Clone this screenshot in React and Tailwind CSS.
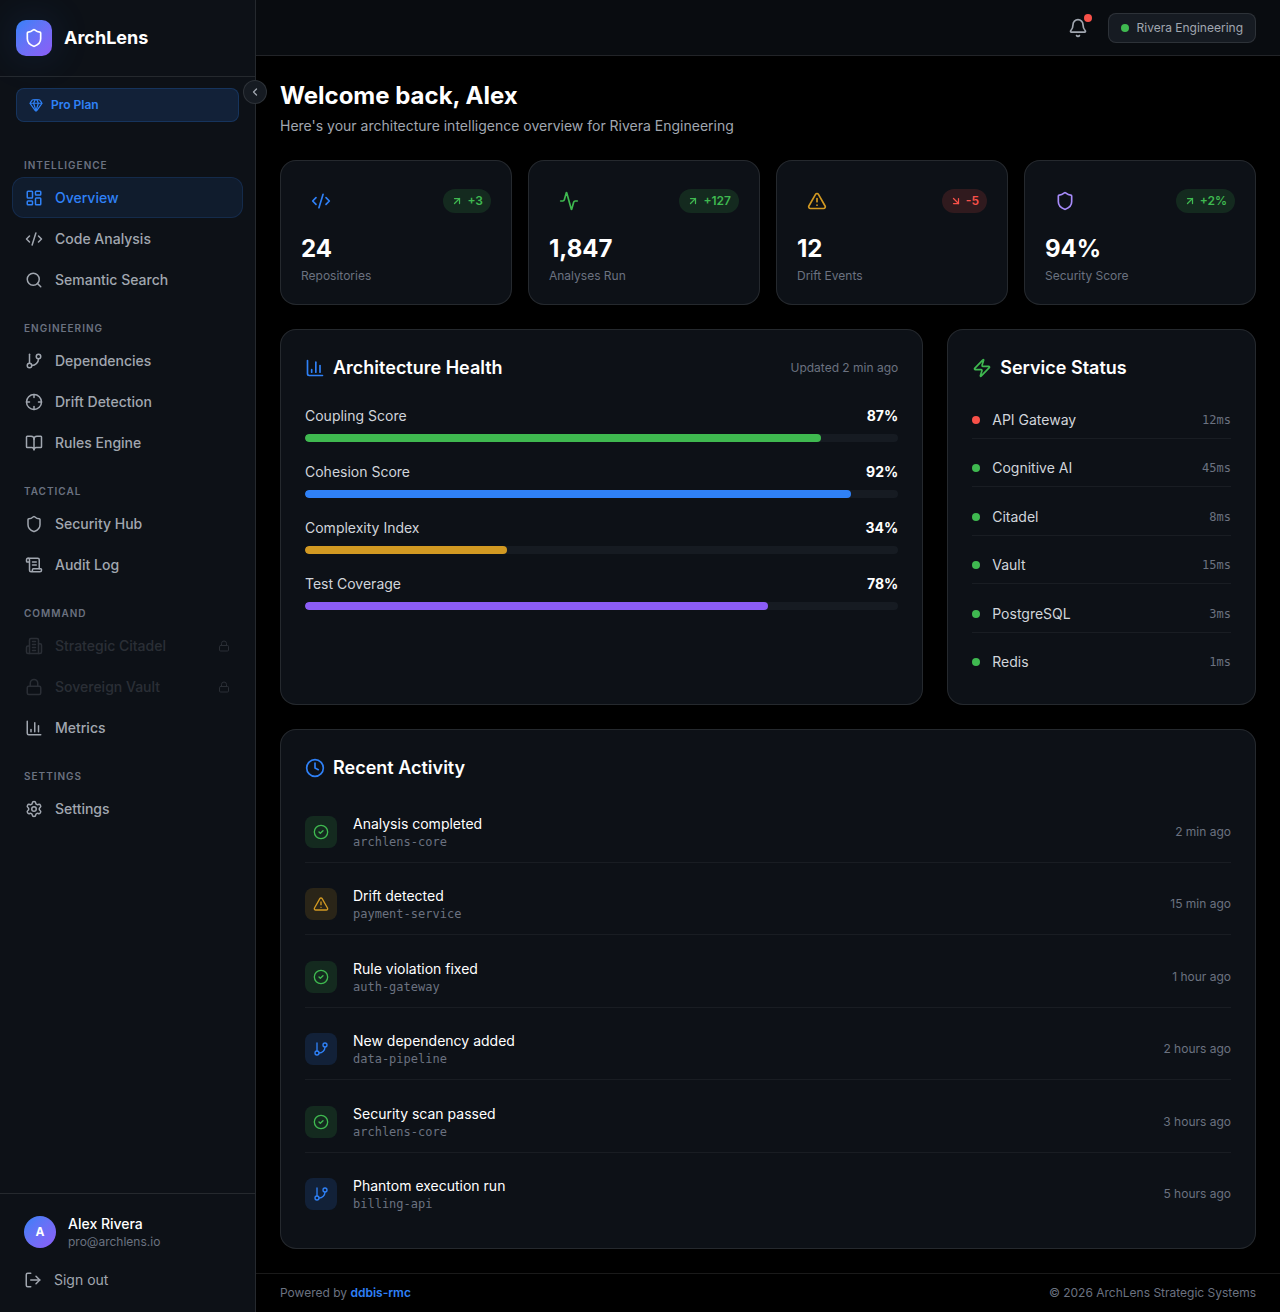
import {
  Activity,
  ArrowDownRight,
  ArrowUpRight,
  Bell,
  BookOpen,
  ChartColumn,
  ChevronLeft,
  CircleCheck,
  Clock,
  CodeXml,
  Crosshair,
  Gem,
  GitBranch,
  LayoutDashboard,
  Lock,
  LogOut,
  ScrollText,
  Search,
  Settings,
  Shield,
  TriangleAlert,
  Zap,
} from 'lucide-react';

function Building({ size = 24 }) {
  return (
    <svg
      width={size}
      height={size}
      viewBox="0 0 24 24"
      fill="none"
      stroke="currentColor"
      strokeWidth="2"
      strokeLinecap="round"
      strokeLinejoin="round"
      aria-hidden="true"
    >
      <path d="M6 22V4a2 2 0 0 1 2-2h8a2 2 0 0 1 2 2v18Z" />
      <path d="M6 12H4a2 2 0 0 0-2 2v6a2 2 0 0 0 2 2h2" />
      <path d="M18 9h2a2 2 0 0 1 2 2v9a2 2 0 0 1-2 2h-2" />
      <path d="M10 6h4M10 10h4M10 14h4M10 18h4" />
    </svg>
  );
}

const sections = [
  {
    title: 'Intelligence',
    items: [
      { name: 'Overview', icon: LayoutDashboard, active: true },
      { name: 'Code Analysis', icon: CodeXml },
      { name: 'Semantic Search', icon: Search },
    ],
  },
  {
    title: 'Engineering',
    items: [
      { name: 'Dependencies', icon: GitBranch },
      { name: 'Drift Detection', icon: Crosshair },
      { name: 'Rules Engine', icon: BookOpen },
    ],
  },
  {
    title: 'Tactical',
    items: [
      { name: 'Security Hub', icon: Shield },
      { name: 'Audit Log', icon: ScrollText },
    ],
  },
  {
    title: 'Command',
    items: [
      { name: 'Strategic Citadel', icon: Building, locked: true },
      { name: 'Sovereign Vault', icon: Lock, locked: true },
      { name: 'Metrics', icon: ChartColumn },
    ],
  },
  {
    title: 'Settings',
    items: [{ name: 'Settings', icon: Settings }],
  },
];

const stats = [
  { label: 'Repositories', value: '24', change: '+3', up: true, icon: CodeXml, color: 'text-[#2f81f7]' },
  { label: 'Analyses Run', value: '1,847', change: '+127', up: true, icon: Activity, color: 'text-[#3fb950]' },
  { label: 'Drift Events', value: '12', change: '-5', up: false, icon: TriangleAlert, color: 'text-[#d29922]' },
  { label: 'Security Score', value: '94%', change: '+2%', up: true, icon: Shield, color: 'text-[#a78bfa]' },
];

const health = [
  { name: 'Coupling Score', value: 87, color: 'bg-[#3fb950]' },
  { name: 'Cohesion Score', value: 92, color: 'bg-[#2f81f7]' },
  { name: 'Complexity Index', value: 34, color: 'bg-[#d29922]' },
  { name: 'Test Coverage', value: 78, color: 'bg-[#8b5cf6]' },
];

const services = [
  { name: 'API Gateway', latency: '12ms', color: 'bg-[#f85149]' },
  { name: 'Cognitive AI', latency: '45ms', color: 'bg-[#3fb950]' },
  { name: 'Citadel', latency: '8ms', color: 'bg-[#3fb950]' },
  { name: 'Vault', latency: '15ms', color: 'bg-[#3fb950]' },
  { name: 'PostgreSQL', latency: '3ms', color: 'bg-[#3fb950]' },
  { name: 'Redis', latency: '1ms', color: 'bg-[#3fb950]' },
];

const success = 'bg-[#3fb950]/15 text-[#3fb950]';
const warning = 'bg-[#d29922]/15 text-[#d29922]';
const info = 'bg-[#2f81f7]/15 text-[#2f81f7]';

const activity = [
  { title: 'Analysis completed', repo: 'archlens-core', time: '2 min ago', icon: CircleCheck, tone: success },
  { title: 'Drift detected', repo: 'payment-service', time: '15 min ago', icon: TriangleAlert, tone: warning },
  { title: 'Rule violation fixed', repo: 'auth-gateway', time: '1 hour ago', icon: CircleCheck, tone: success },
  { title: 'New dependency added', repo: 'data-pipeline', time: '2 hours ago', icon: GitBranch, tone: info },
  { title: 'Security scan passed', repo: 'archlens-core', time: '3 hours ago', icon: CircleCheck, tone: success },
  { title: 'Phantom execution run', repo: 'billing-api', time: '5 hours ago', icon: GitBranch, tone: info },
];

function NavItem({ item }) {
  const Icon = item.icon;

  if (item.locked) {
    return (
      <li>
        <button
          type="button"
          disabled
          className="flex w-full h-[41px] items-center gap-3 px-3 rounded-xl border border-transparent text-sm font-medium text-[#9ca3af] opacity-20"
        >
          <Icon size={18} />
          <span>{item.name}</span>
          <Lock size={12} className="ml-auto" />
        </button>
      </li>
    );
  }

  return (
    <li>
      <a
        href="#"
        className={
          item.active
            ? 'flex h-[41px] items-center gap-3 px-3 rounded-xl border border-[#2f81f7]/15 bg-[#2f81f7]/10 text-sm font-medium text-[#2f81f7]'
            : 'flex h-[41px] items-center gap-3 px-3 rounded-xl border border-transparent text-sm font-medium text-[#a1a7b0] hover:bg-white/5'
        }
      >
        <Icon size={18} />
        <span>{item.name}</span>
      </a>
    </li>
  );
}

function SideBar() {
  return (
    <aside className="relative flex flex-col w-64 shrink-0 bg-[#0d1117] border-r border-white/10">
      <div className="flex items-center gap-3 px-4 py-5 border-b border-white/10">
        <div className="flex items-center justify-center w-9 h-9 rounded-[10px] bg-linear-to-br from-[#2f81f7] to-[#8b5cf6] text-white shadow-[0_0_40px_rgba(47,129,247,0.15)]">
          <Shield size={20} />
        </div>
        <span className="text-lg font-bold text-white">ArchLens</span>
      </div>

      <button
        type="button"
        aria-label="Collapse sidebar"
        className="absolute top-20 -right-3 z-10 flex items-center justify-center w-6 h-6 rounded-full border border-white/10 bg-[#161b22] text-[#a1a7b0]"
      >
        <ChevronLeft size={12} strokeWidth={2.5} />
      </button>

      <div className="flex items-center gap-2 h-[34px] mx-4 mt-[11px] px-3 rounded-lg border border-[#2f81f7]/20 bg-[#2f81f7]/15 text-xs font-semibold text-[#2f81f7]">
        <Gem size={14} />
        Pro Plan
      </div>

      <nav className="flex flex-col gap-5 px-3 pt-[35px]">
        {sections.map((section) => (
          <div key={section.title}>
            <h2 className="px-3 mb-1 text-[10px] leading-4 font-semibold uppercase tracking-widest text-[#6b7280]">
              {section.title}
            </h2>
            <ul>
              {section.items.map((item) => (
                <NavItem key={item.name} item={item} />
              ))}
            </ul>
          </div>
        ))}
      </nav>

      <div className="mt-auto p-3 border-t border-white/10">
        <div className="flex items-center gap-3 px-3 py-2">
          <div className="flex items-center justify-center w-8 h-8 rounded-full bg-linear-to-br from-[#2f81f7] to-[#8b5cf6] text-xs font-bold text-white">
            A
          </div>
          <div>
            <p className="text-sm leading-5 font-medium text-white">Alex Rivera</p>
            <p className="text-xs leading-4 text-[#6b7280]">pro@archlens.io</p>
          </div>
        </div>
        <button
          type="button"
          className="flex w-full h-10 mt-0.5 items-center gap-3 px-3 text-sm text-[#a1a7b0]"
        >
          <LogOut size={18} />
          Sign out
        </button>
      </div>
    </aside>
  );
}

function StatCard({ stat }) {
  const Icon = stat.icon;
  const Arrow = stat.up ? ArrowUpRight : ArrowDownRight;

  return (
    <div className="p-5 rounded-2xl border border-white/10 bg-[#0d1117]">
      <div className="flex items-center justify-between mb-3">
        <div className={`flex items-center justify-center w-10 h-10 ${stat.color}`}>
          <Icon size={20} />
        </div>
        <span
          className={
            stat.up
              ? 'flex items-center gap-1 h-6 px-2 rounded-full bg-[#3fb950]/15 text-xs font-semibold text-[#3fb950]'
              : 'flex items-center gap-1 h-6 px-2 rounded-full bg-[#f85149]/15 text-xs font-semibold text-[#f85149]'
          }
        >
          <Arrow size={12} strokeWidth={2.5} />
          {stat.change}
        </span>
      </div>
      <p className="text-2xl leading-8 font-bold text-white">{stat.value}</p>
      <p className="mt-[3px] text-xs leading-4 text-[#6b7280]">{stat.label}</p>
    </div>
  );
}

export default function App() {
  return (
    <div className="flex bg-black font-['Inter',sans-serif]">
      <SideBar />

      <div className="flex flex-col flex-1 min-w-0">
        <header className="flex items-center justify-end gap-3 h-14 px-6 bg-[#090c10] border-b border-white/10">
          <button type="button" aria-label="Notifications" className="relative p-2 text-[#a1a7b0]">
            <Bell size={20} />
            <span className="absolute top-1 right-1 w-2 h-2 rounded-full bg-[#f85149]" />
          </button>
          <div className="flex items-center gap-2 h-[30px] px-3 rounded-lg border border-white/10 bg-[#161b22] text-xs text-[#a1a7b0]">
            <span className="w-2 h-2 rounded-full bg-[#3fb950]" />
            Rivera Engineering
          </div>
        </header>

        <main className="flex flex-col gap-6 p-6">
          <div>
            <h1 className="text-2xl leading-8 font-bold text-white">Welcome back, Alex</h1>
            <p className="mt-1 text-sm leading-5 text-[#a1a7b0]">
              Here's your architecture intelligence overview for Rivera Engineering
            </p>
          </div>

          {/* Stats */}
          <div className="grid grid-cols-2 lg:grid-cols-4 gap-4">
            {stats.map((stat) => (
              <StatCard key={stat.label} stat={stat} />
            ))}
          </div>

          <div className="grid grid-cols-1 lg:grid-cols-[25fr_12fr] gap-6 lg:min-h-[376px]">
            {/* Architecture Health */}
            <section className="p-6 rounded-2xl border border-white/10 bg-[#0d1117]">
              <div className="flex items-center justify-between mb-6">
                <h2 className="flex items-center gap-2 text-lg leading-7 font-semibold text-white">
                  <ChartColumn size={20} className="text-[#2f81f7]" />
                  Architecture Health
                </h2>
                <span className="text-xs text-[#6b7280]">Updated 2 min ago</span>
              </div>
              <div className="flex flex-col gap-5">
                {health.map((metric) => (
                  <div key={metric.name}>
                    <div className="flex justify-between mb-2 text-sm leading-5">
                      <span className="text-[#d1d5db]">{metric.name}</span>
                      <span className="font-bold text-white">{metric.value}%</span>
                    </div>
                    <div className="h-2 rounded-full bg-[#161b22] overflow-hidden">
                      <div
                        className={`h-full rounded-full ${metric.color}`}
                        style={{ width: `${metric.value}%` }}
                      />
                    </div>
                  </div>
                ))}
              </div>
            </section>

            {/* Service Status */}
            <section className="flex flex-col p-6 rounded-2xl border border-white/10 bg-[#0d1117]">
              <h2 className="flex items-center gap-2 mb-5 text-lg leading-7 font-semibold text-white">
                <Zap size={20} className="text-[#3fb950]" />
                Service Status
              </h2>
              <ul className="flex flex-col flex-1 justify-between">
                {services.map((service) => (
                  <li
                    key={service.name}
                    className="flex items-center gap-3 py-2 border-b border-white/5 last:border-b-0"
                  >
                    <span className={`w-2 h-2 rounded-full ${service.color}`} />
                    <span className="text-sm leading-5 text-[#d1d5db]">{service.name}</span>
                    <span className="ml-auto font-['DejaVu_Sans_Mono',monospace] text-xs text-[#6b7280]">
                      {service.latency}
                    </span>
                  </li>
                ))}
              </ul>
            </section>
          </div>

          {/* Recent Activity */}
          <section className="flex flex-col min-h-[520px] p-6 rounded-2xl border border-white/10 bg-[#0d1117]">
            <h2 className="flex items-center gap-2 mb-5 text-lg leading-7 font-semibold text-white">
              <Clock size={20} className="text-[#2f81f7]" />
              Recent Activity
            </h2>
            <ul className="flex flex-col flex-1 justify-between">
              {activity.map((event) => (
                <li
                  key={event.title}
                  className="flex items-center gap-4 py-3 border-b border-white/5 last:border-b-0"
                >
                  <div className={`flex items-center justify-center w-8 h-8 rounded-lg ${event.tone}`}>
                    <event.icon size={16} />
                  </div>
                  <div>
                    <p className="text-sm leading-5 text-white">{event.title}</p>
                    <p className="font-['DejaVu_Sans_Mono',monospace] text-xs leading-4 text-[#6b7280]">
                      {event.repo}
                    </p>
                  </div>
                  <span className="ml-auto text-xs text-[#6b7280]">{event.time}</span>
                </li>
              ))}
            </ul>
          </section>
        </main>

        <footer className="flex items-center justify-between h-[39px] px-6 border-t border-white/10 text-xs text-[#6b7280]">
          <p>
            Powered by{' '}
            <a href="#" className="font-semibold text-[#2f81f7]">
              ddbis-rmc
            </a>
          </p>
          <p>© 2026 ArchLens Strategic Systems</p>
        </footer>
      </div>
    </div>
  );
}
